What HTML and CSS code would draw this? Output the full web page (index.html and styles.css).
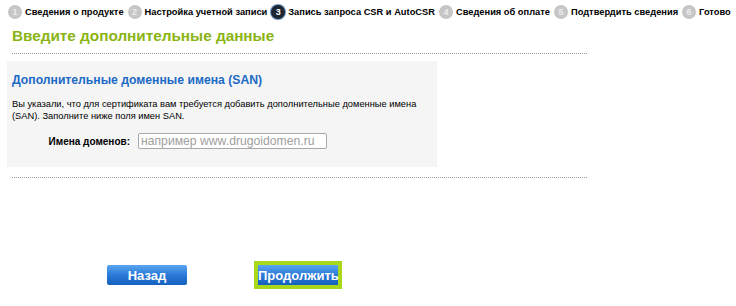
FILE: index.html
```html
<!DOCTYPE html>
<html lang="ru">
<head>
    <meta charset="UTF-8">
    <meta name="viewport" content="width=device-width, initial-scale=1.0">
    <title>Запись запроса CSR</title>
    <link rel="stylesheet" href="styles.css">
</head>
<body>
    <ul class="steps">
        <li class="step"><span class="step-num">1</span>Сведения о продукте</li>
        <li class="step"><span class="step-num">2</span>Настройка учетной записи</li>
        <li class="step active"><span class="step-num">3</span>Запись запроса CSR и AutoCSR</li>
        <li class="step"><span class="step-num">4</span>Сведения об оплате</li>
        <li class="step"><span class="step-num">5</span>Подтвердить сведения</li>
        <li class="step"><span class="step-num">6</span>Готово</li>
    </ul>

    <div class="page">
        <h1 class="page-title">Введите дополнительные данные</h1>
        <div class="divider"></div>

        <div class="san-box">
            <h2 class="san-title">Дополнительные доменные имена (SAN)</h2>
            <p class="san-text">Вы указали, что для сертификата вам требуется добавить дополнительные доменные имена (SAN). Заполните ниже поля имен SAN.</p>
            <div class="form-row">
                <label for="domains">Имена доменов:</label>
                <input type="text" id="domains" placeholder="например www.drugoidomen.ru">
            </div>
        </div>

        <div class="divider divider-bottom"></div>

        <div class="buttons">
            <button type="button" class="btn btn-back">Назад</button>
            <span class="btn-focus"><button type="submit" class="btn btn-next">Продолжить</button></span>
        </div>
    </div>
</body>
</html>
```

FILE: styles.css
```css
body {
    font-family: "Liberation Sans", Arial, sans-serif;
    margin: 0;
    padding: 0;
    background-color: #fff;
    color: #000;
}

.steps {
    list-style: none;
    margin: 0;
    padding: 4px 0 0 8px;
    display: flex;
    align-items: center;
    height: 16px;
}

.step {
    display: flex;
    align-items: center;
    font-size: 9.3px;
    font-weight: bold;
    margin-right: 4px;
    white-space: nowrap;
}

.step-num {
    width: 14px;
    height: 14px;
    border-radius: 50%;
    background-color: #c6c6c6;
    color: #ececec;
    font-size: 9px;
    display: flex;
    align-items: center;
    justify-content: center;
    margin-right: 3px;
}

.step.active .step-num {
    background-color: #1d2733;
    color: #fff;
    box-shadow: 0 0 0 1px #6a94c0;
}

.page {
    margin-left: 7px;
    width: 585px;
}

.page-title {
    margin: 6px 0 0 5px;
    font-size: 15.3px;
    line-height: 20px;
    color: #8ab414;
}

.divider {
    margin: 7px 0 0 5px;
    border-top: 1px dotted #9a9a9a;
    width: 575px;
}

.divider-bottom {
    margin-top: 10px;
}

.san-box {
    background-color: #f5f5f5;
    width: 420px;
    margin-top: 7px;
    padding: 11px 5px 18px 5px;
}

.san-title {
    margin: 0;
    font-size: 12.2px;
    line-height: 17px;
    color: #1c6ac6;
}

.san-text {
    margin: 9px 0 0 0;
    font-size: 9.3px;
    line-height: 12px;
    width: 410px;
}

.form-row {
    display: flex;
    align-items: center;
    margin-top: 11px;
}

.form-row label {
    width: 118px;
    text-align: right;
    font-size: 10px;
    font-weight: bold;
    margin-right: 8px;
}

.form-row input {
    width: 183px;
    height: 14px;
    padding: 0 2px;
    border: 1px solid #a9a9a9;
    border-radius: 2px;
    font-family: "Liberation Sans", Arial, sans-serif;
    font-size: 12.2px;
    background-color: #fff;
}

.form-row input::placeholder {
    color: #a0a0a0;
}

.buttons {
    display: flex;
    align-items: center;
    margin-top: 83px;
    padding-left: 100px;
}

.btn {
    height: 20px;
    border: none;
    border-radius: 2px;
    color: #fff;
    font-family: "Liberation Sans", Arial, sans-serif;
    font-size: 13px;
    font-weight: bold;
    background: linear-gradient(#5aa6f2, #2a7ad8 50%, #1560bd);
    cursor: pointer;
    padding: 0;
}

.btn-back {
    width: 80px;
}

.btn-focus {
    display: flex;
    margin-left: 67px;
    border: 4px solid #a9d81a;
}

.btn-next {
    width: 80px;
    border-radius: 0;
}
```
